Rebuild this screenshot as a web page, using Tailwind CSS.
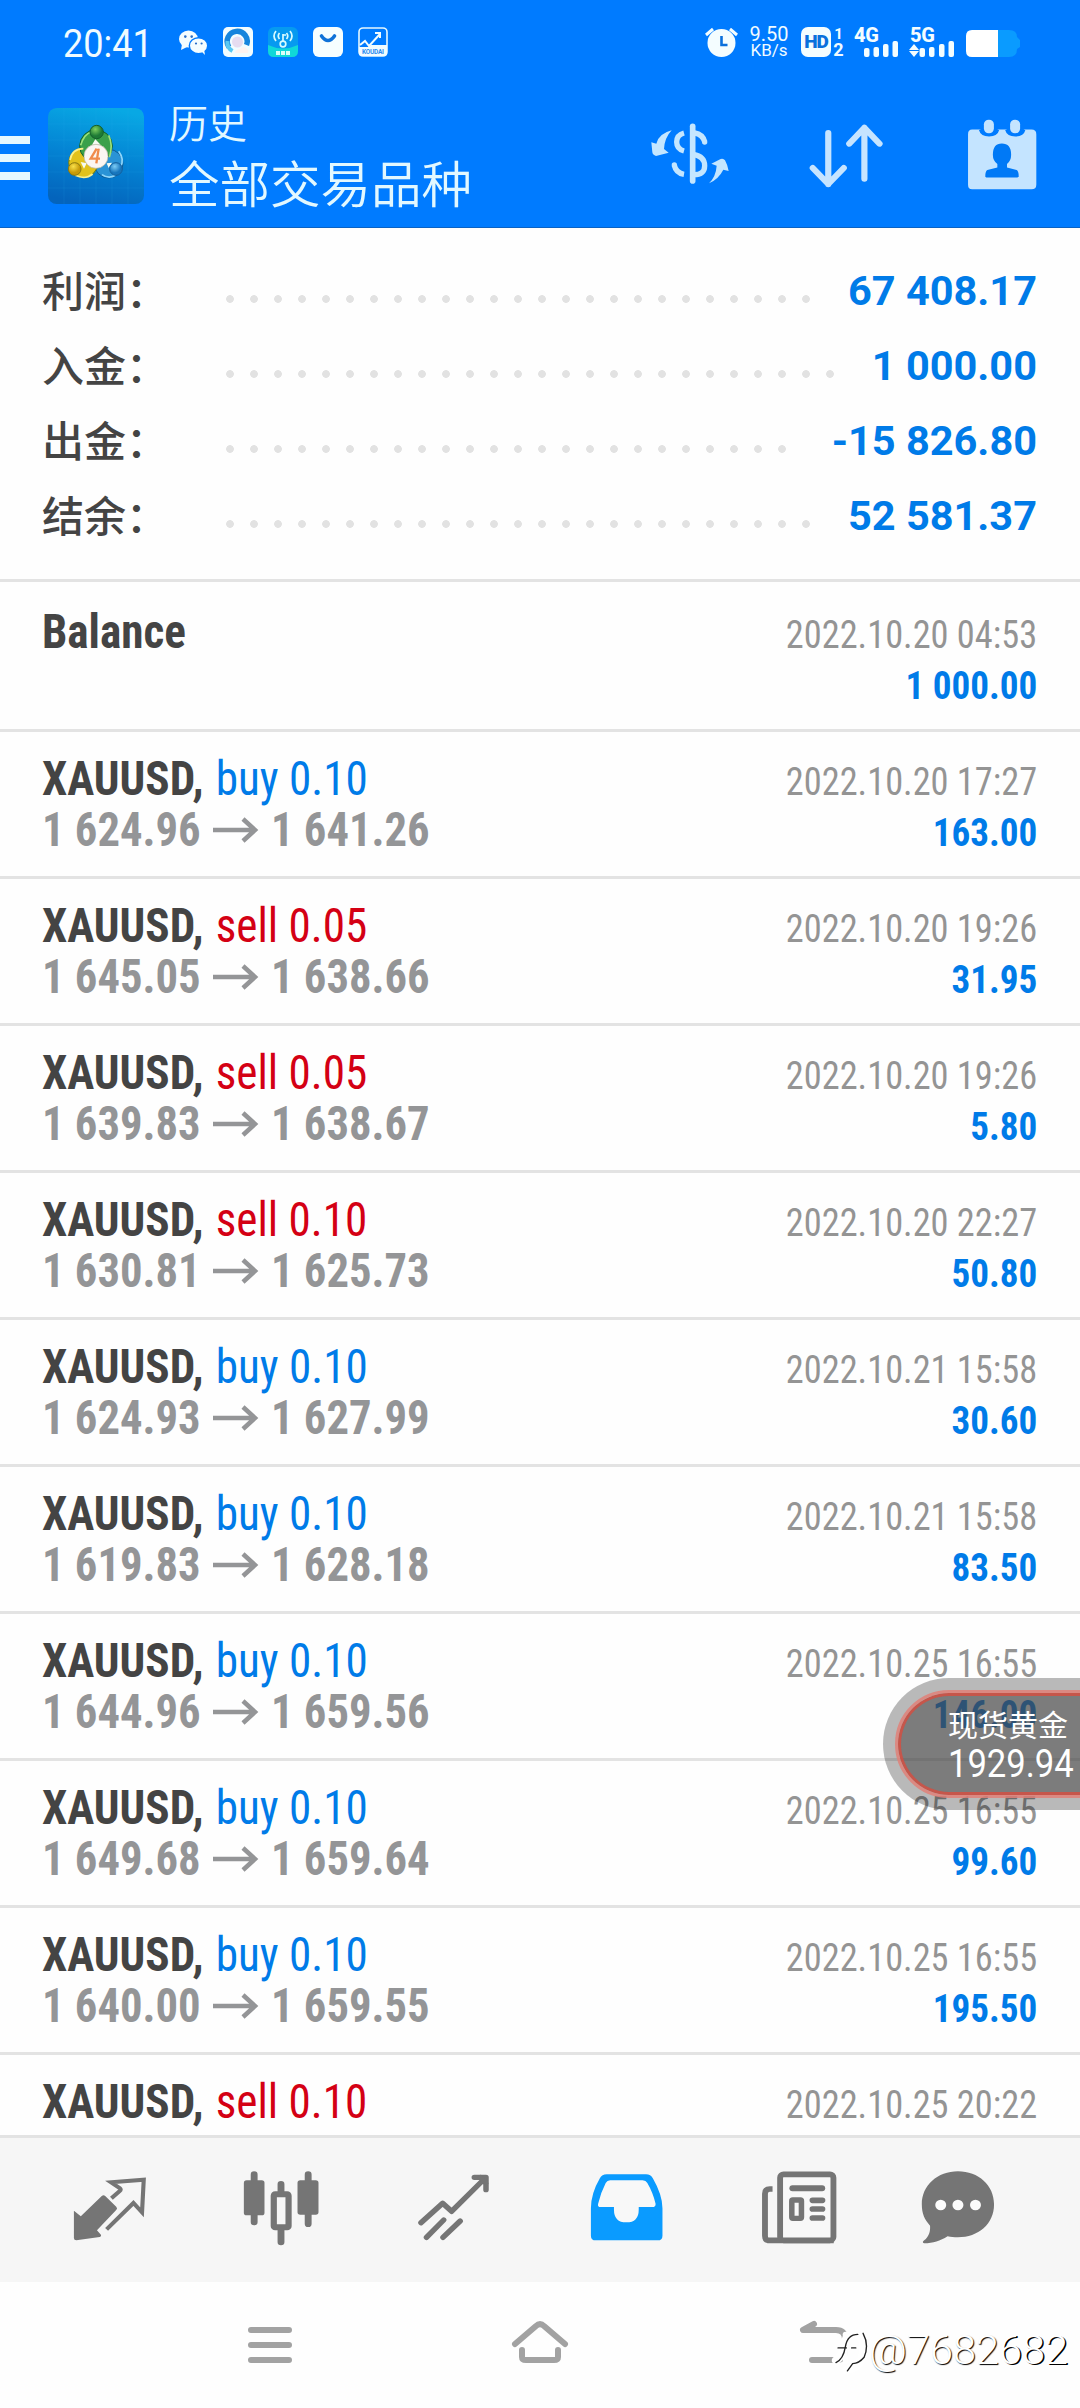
<!DOCTYPE html>
<html lang="zh-CN">
<head>
<meta charset="utf-8">
<title>历史</title>
<script src="https://cdn.jsdelivr.net/npm/@tailwindcss/browser@4"></script>
</head>
<body class="bg-[#fefefe]">
<div class="relative flex h-[2408px] w-[1080px] flex-col overflow-hidden bg-[#fefefe] font-[Roboto,'Noto_Sans_CJK_SC',sans-serif]">

  <header class="h-[228px] shrink-0 border-b border-[#0a62c4] bg-[#007bff]">
    <!-- status bar -->
    <div class="flex h-[84px] justify-between pt-[27px] pr-[60px] pl-[63px] text-[#f0fbff]">
      <div class="flex items-start">
        <div class="w-[116px]"><span class="block origin-left scale-x-95 text-[38px] leading-[35px] whitespace-nowrap [font-weight:430]">20:41</span></div>
        <svg class="mt-[3px] h-[25px] w-[28px]" viewBox="0 0 28 25"><ellipse cx="9.5" cy="9" rx="9.5" ry="8.6" fill="#f4fdff"/><path d="M3 14l-1 6 6-3z" fill="#f4fdff"/><ellipse cx="19.5" cy="15.7" rx="9.2" ry="8" fill="#f4fdff" stroke="#007bff" stroke-width="1.4"/><path d="M22 21l4 4-1-6z" fill="#f4fdff"/><g fill="#2a6fc8"><circle cx="6.3" cy="6.6" r="1.3"/><circle cx="12.7" cy="6.6" r="1.3"/><circle cx="17" cy="13.5" r="1.1"/><circle cx="22.6" cy="13.5" r="1.1"/></g></svg>
        <svg class="ml-4 size-[30px]" viewBox="0 0 30 30"><rect width="30" height="30" rx="5" fill="#f2fcff"/><path d="M6 20A10 10 0 1 1 23.500 18" fill="none" stroke="#1685dd" stroke-width="5.500"/><path d="M4.500 14a10 10 0 0 0 5 10" fill="none" stroke="#59c8f2" stroke-width="4"/><circle cx="14.500" cy="15" r="5.500" fill="#e6dcf0"/><path d="M12 26q1-4 5-4 3-4 7 0 2 1 1 4z" fill="#fff3f0"/></svg>
        <svg class="ml-[15px] size-[30px]" viewBox="0 0 30 30"><rect width="30" height="30" rx="6" fill="#069af0"/><path d="M0 18q15 7 30 0v6q0 6-6 6H6q-6 0-6-6z" fill="#10d8d8"/><g fill="none" stroke="#d8fbff" stroke-width="1.700"><path d="M8 4q-4 5 0 10M11.500 6q-2.500 3 0 6M22 4q4 5 0 10M18.500 6q2.500 3 0 6M15 7v8M15 8h3"/><circle cx="15" cy="17" r="2.800"/></g><g fill="#d8fff8"><rect x="8" y="24" width="4" height="4"/><rect x="13" y="24" width="4" height="4"/><rect x="18" y="24" width="4" height="4"/></g></svg>
        <svg class="ml-[15px] size-[30px]" viewBox="0 0 30 30"><rect width="30" height="30" rx="6" fill="#f6feff"/><path d="M8.500 9q6.500 9 13 0" fill="none" stroke="#0f72d8" stroke-width="3.600" stroke-linecap="round"/></svg>
        <svg class="ml-[15px] size-[30px] overflow-visible" viewBox="0 0 30 30"><rect x="1" y="1" width="28" height="28" rx="4" fill="none" stroke="#e4f8ff" stroke-width="1.600"/><path d="M1 20h9l3-2h16v8q0 3-3 3H4q-3 0-3-3z" fill="#f2fcff"/><path d="M2 18l5-4 4 5L22 7M17 6h5v5" fill="none" stroke="#f2fcff" stroke-width="2"/><text x="15" y="27" font-size="6.500" font-weight="700" text-anchor="middle" fill="#2b8cf0" textLength="22">KOUDAI</text></svg>
      </div>
      <div class="flex items-start">
        <svg class="h-[30px] w-[33px]" viewBox="0 0 33 30"><circle cx="16.500" cy="16" r="14" fill="#f4fdff"/><path d="M1 8l7-6M32 8l-7-6" stroke="#f4fdff" stroke-width="3"/><path d="M16.500 9v9h6" fill="none" stroke="#0a70dc" stroke-width="2.600"/></svg>
        <div class="ml-[12px] flex w-[38px] flex-col items-center"><span class="text-[20px] leading-[15px]">9.50</span><span class="mt-px text-[17px] leading-[15px]">KB/s</span></div>
        <div class="ml-[13px] flex h-[30px] w-[30px] items-center justify-center rounded-[7px] bg-[#f4fdff] text-[19px] font-black tracking-[-1px] text-[#0a70dc]">HD</div>
        <div class="ml-[2px] flex w-[11px] flex-col items-center font-bold"><span class="text-[15px] leading-[14px]">1</span><span class="text-[18px] leading-[17px]">2</span></div>
        <svg class="ml-[10px] h-[30px] w-[46px] overflow-visible" viewBox="0 0 46 30"><text x="0" y="14.500" font-size="20" font-weight="800" textLength="25" fill="#f4fdff">4G</text><g fill="#f4fdff"><rect x="10" y="21" width="5.500" height="9" rx="2"/><rect x="19.500" y="20" width="5.500" height="10" rx="2"/><rect x="29" y="17" width="5.500" height="13" rx="2"/><rect x="38.500" y="14" width="5.500" height="16" rx="2"/></g></svg>
        <svg class="ml-[9px] h-[30px] w-[47px] overflow-visible" viewBox="0 0 47 30"><text x="1" y="14.500" font-size="20" font-weight="800" textLength="25" fill="#f4fdff">5G</text><g fill="#f4fdff"><path d="M5 17l5 6H0zM5 30l5-6H0z"/><rect x="10.500" y="21" width="5.500" height="9" rx="2"/><rect x="20" y="20" width="5.500" height="10" rx="2"/><rect x="30" y="17" width="5.500" height="13" rx="2"/><rect x="39.500" y="14" width="5.500" height="16" rx="2"/></g></svg>
        <svg class="ml-[10px] h-[30px] w-[54px]" viewBox="0 0 54 30"><path d="M32 3h11q8 0 8 7l3 3v7l-3 2q0 8-8 8H32z" fill="#0a9bff"/><path d="M6 3h26v27H6q-6 0-6-6V9q0-6 6-6z" fill="#fff"/></svg>
      </div>
    </div>
    <!-- title bar -->
    <div class="flex h-[143px] items-start pt-[15px]">
      <div class="mt-[37px] flex w-[30px] flex-col gap-[10px]"><i class="h-2 bg-[#e6f8ff]"></i><i class="h-2 bg-[#e6f8ff]"></i><i class="h-2 bg-[#e6f8ff]"></i></div>
      <svg class="mt-[9px] ml-[18px] size-24" viewBox="24 54 288 288">
        <defs>
          <linearGradient id="t" x1=".6" y1="0" x2=".4" y2="1"><stop offset="0" stop-color="#08a8e4"/><stop offset=".5" stop-color="#0484d4"/><stop offset="1" stop-color="#0464bc"/></linearGradient>
          <radialGradient id="g" cx=".4" cy=".3"><stop offset="0" stop-color="#7fd060"/><stop offset="1" stop-color="#1d7a35"/></radialGradient>
          <radialGradient id="y" cx=".4" cy=".3"><stop offset="0" stop-color="#f8e04a"/><stop offset="1" stop-color="#c79a08"/></radialGradient>
          <radialGradient id="b" cx=".4" cy=".3"><stop offset="0" stop-color="#7cccf5"/><stop offset="1" stop-color="#1675bd"/></radialGradient>
        </defs>
        <rect x="24" y="54" width="288" height="288" rx="26" fill="url(#t)"/>
        <path d="M72 54v288M120 54v288M168 54v288M216 54v288M264 54v288M24 102h288M24 150h288M24 198h288M24 246h288M24 294h288" stroke="#2fb4ea" stroke-opacity=".2" stroke-width="2"/>
        <g stroke-width="3">
          <circle cx="206" cy="221" r="43" fill="#2a93d6" stroke="#0e5a92"/>
          <circle cx="130" cy="218" r="44" fill="#e2c21c" stroke="#6b7a10"/>
          <circle cx="168" cy="168" r="49" fill="#3aa04a" stroke="#12602a"/>
          <path d="M122 166q10-34 32-40M206 136q14 30 2 66" fill="none" stroke="#9be07a" stroke-width="5"/>
          <path d="M90 210q6-34 40-34M106 256q30 14 52-4" fill="none" stroke="#fbf08a" stroke-width="5"/>
          <path d="M236 184q18 24 6 46M186 254q20 14 40 2" fill="none" stroke="#8fd6fa" stroke-width="5"/>
          <path d="M166 148l-10 16h26zM122 216l10 20 8-16zM200 220l6 14 10-16z" fill="#f6fbf2"/>
          <circle cx="170" cy="126" r="20" fill="url(#g)" stroke="#155f2b"/>
          <circle cx="104" cy="237" r="19" fill="url(#y)" stroke="#8a7a10"/>
          <circle cx="228" cy="237" r="19" fill="url(#b)" stroke="#135f9c"/>
        </g>
        <circle cx="168" cy="199" r="36" fill="#fbf6f2" stroke="#b9b4a0" stroke-width="2"/>
        <path d="M170 176l-18 30h28M176 176l-7 44" fill="none" stroke="#f08a4a" stroke-width="7"/>
      </svg>
      <div class="ml-[25px] flex w-[479px] flex-col font-['Noto_Sans_CJK_SC'] text-[#e2f8ff] [font-weight:350]">
        <span class="h-[54px] text-[39px] leading-[44px]">历史</span>
        <span class="text-[50.500px] leading-[56px]">全部交易品种</span>
      </div>
      <svg class="mt-[18px] h-[70px] w-[81px]" preserveAspectRatio="none" viewBox="0 0 243 210">
        <g transform="translate(-24,-22)" fill="#c4e6ff">
          <path d="M95 62Q56 72 49 102L34 98 37 128Q38 136 48 139L86 129 72 118Q74 84 95 62z" />
          <path d="M207 221Q236 208 250 180L266 184Q263 166 255 152Q250 145 242 148L214 162 230 168Q228 200 207 221z"/>
          <path d="M158 50v164" stroke="#c4e6ff" stroke-width="17" stroke-linecap="round"/>
          <g fill="none" stroke="#c4e6ff" stroke-width="16"><path d="M132 70Q110 76 110 97T132 124"/><path d="M103 167Q108 190 132 194"/><path d="M164 70Q188 74 194 96" /><path d="M160 134Q194 140 194 168T160 195"/></g>
          <circle cx="103" cy="166" r="8"/><circle cx="194" cy="97" r="8"/>
        </g>
      </svg>
      <svg class="mt-[23px] ml-[80px] h-[68px] w-[75px]" preserveAspectRatio="none" viewBox="780 365 218 204" fill="none" stroke="#c6e4ff" stroke-width="18" stroke-linecap="round" stroke-linejoin="round"><path d="M836 398v154M791 503l45 48 45-48M941 535V382M897 430l44-48 44 48"/></svg>
      <svg class="mt-[20px] ml-[83px] h-[71px] w-[70px]" preserveAspectRatio="none" viewBox="1240 358 203 214"><path d="M1255 390h24q4 16 25 16t25-16h26q4 16 25 16t25-16h22q14 0 14 14v152q0 14-14 14h-172q-12 0-12-14V404q0-14 12-14z" fill="#c4e4ff"/><path d="M1279 390q4 16 25 16t25-16M1355 390q4 16 25 16t25-16" fill="none" stroke="#007bff" stroke-width="9"/><rect x="1289" y="360" width="29" height="41" rx="14" fill="#c4e4ff"/><rect x="1365" y="360" width="29" height="41" rx="14" fill="#c4e4ff"/><path d="M1341 432q27 0 27 34 0 18-12 28v10l28 8q6 3 6 20l-4 2h-90l-3-2q0-17 6-20l29-8v-10q-13-10-13-28 0-34 26-34z" fill="#0079f6"/></svg>
    </div>
  </header>

  <!-- totals -->
  <section id="totals" class="h-[354px] shrink-0 border-b-[3px] border-[#e3e3e3] pt-[24px] pr-[43px] pl-[42px]"></section>

  <!-- deals -->
  <main id="deals" class="h-[1553px] shrink-0 overflow-hidden"></main>

  <!-- tab bar -->
  <nav class="grid h-[147px] shrink-0 grid-cols-6 items-start justify-items-center border-t-[3px] border-[#e3e3e3] bg-[#f6f6f6] px-[23px] pt-[29px]">
    <svg class="h-[80px] w-[86px]" preserveAspectRatio="none" viewBox="192 410 250 240" fill="#757575"><path d="M215 541l20 17 61-61q5-4 10 0l32 32q5 5 0 10l-56 61 12 14q1 5-4 6l-68 10q-7 0-7-7z"/><path d="M324 504l24-22q6-4 0-9l-25-17 95-8-5 98-25-28-78 79" fill="none" stroke="#757575" stroke-width="12"/></svg>
    <svg class="h-[80px] w-[86px]" preserveAspectRatio="none" viewBox="692 410 250 240"><g stroke="#757575" stroke-width="20" stroke-linecap="round"><path d="M739 433v142M896 433v147M817 462v30M817 600v35"/></g><rect x="709" y="450" width="60" height="105" rx="8" fill="#757575"/><rect x="865" y="450" width="61" height="103" rx="8" fill="#757575"/><rect x="796" y="492" width="43" height="99" rx="4" fill="#f6f6f6" stroke="#757575" stroke-width="18"/></svg>
    <svg class="h-[80px] w-[86px]" preserveAspectRatio="none" viewBox="1193 410 250 240" fill="none" stroke="#757575" stroke-width="16" stroke-linejoin="round" stroke-linecap="round"><path d="M1222 577l63-58 26 24 92-94M1377 441h34v37M1238 621l50-52M1286 621l50-49"/><path d="M1395 441l16 18" stroke-width="14"/></svg>
    <svg class="h-[80px] w-[86px]" preserveAspectRatio="none" viewBox="125 410 250 240"><path d="M194 432h114q14 0 20 12 28 50 28 90v82q0 14-14 14H162q-14 0-14-14v-82q0-44 26-90 6-12 20-12z" fill="#0a9bff"/><path d="M204 450h94q10 0 14 8 16 28 24 62 1 10-10 10h-39v8q0 38-36 38t-36-38v-8h-38q-11 0-8-10 8-34 22-62 4-8 13-8z" fill="#f8f8f8"/></svg>
    <svg class="h-[80px] w-[86px]" preserveAspectRatio="none" viewBox="626 410 250 240" fill="none" stroke="#757575"><path d="M668 630h-5q-8-2-8-14V490q0-14 14-14h8M663 630h192" stroke-width="17"/><rect x="699" y="432" width="155" height="198" rx="10" stroke-width="17" fill="#f8f8f8"/><path d="M735 474h86" stroke-width="18" stroke-linecap="round"/><rect x="733" y="509" width="28" height="55" rx="3" stroke-width="16"/><path d="M793 510h29M793 536h29M793 563h29" stroke-width="17" stroke-linecap="round"/></svg>
    <svg class="h-[80px] w-[86px] overflow-visible" preserveAspectRatio="none" viewBox="1126 410 250 240"><path d="M1213 423c60 0 105 42 105 99 0 60-46 99-105 99-12 0-20-1-30-3-22 14-42 21-68 21-6-2-4-6 0-9 14-12 18-26 17-44-16-18-24-36-24-64 0-57 46-99 105-99z" fill="#757575"/><g fill="#fbfbfb"><circle cx="1163" cy="524" r="16"/><circle cx="1213" cy="524" r="16"/><circle cx="1264" cy="524" r="16"/></g></svg>
  </nav>

  <!-- system navigation -->
  <div class="flex h-[126px] shrink-0 items-start pt-[38px]">
    <svg class="ml-[247px] h-[44px] w-[46px]" viewBox="0 0 46 44" stroke="#a2a2a2" stroke-width="6" stroke-linecap="round"><path d="M4 10h38M4 25h38M4 40h38"/></svg>
    <svg class="ml-[218px] h-[46px] w-[58px]" viewBox="0 0 58 46" fill="none" stroke="#a2a2a2" stroke-width="6" stroke-linecap="round" stroke-linejoin="round"><path d="M4 24L25 6q4-4 8 0l21 18M11 30v7q0 3 4 3h28q4 0 4-3v-7"/></svg>
    <svg class="ml-[230px] h-[46px] w-[50px]" viewBox="0 0 50 46" fill="none" stroke="#a2a2a2" stroke-width="6" stroke-linecap="round" stroke-linejoin="round"><path d="M15 4L4 10h33q9 0 9 9v12q0 9-9 9H13"/></svg>
  </div>

  <!-- floating quote -->
  <aside class="absolute top-[1678px] left-[883px] h-[132px] w-[280px] rounded-full bg-black/27 p-3">
    <div class="h-full rounded-full border-[3px] border-[#e08078]/85">
      <div class="flex h-full flex-col rounded-full border-[3px] border-[#d24f42]/85 bg-[#505050]/58 pl-[47px] text-white">
        <span class="mt-[8px] font-['Noto_Sans_CJK_SC'] text-[30px] leading-[38px]">现货黄金</span>
        <span class="mt-[3px] origin-left scale-x-91 text-[38px] leading-[38px] [font-weight:430]">1929.94</span>
      </div>
    </div>
  </aside>

  <!-- watermark -->
  <div class="absolute top-[2326px] left-[829px] flex items-center font-light text-white">
    <svg class="h-[48px] w-[40px]" viewBox="0 0 37 46" fill="none" stroke-linecap="round"><path d="M6 33Q12 30 14 18T26 8Q34 12 32 26T16 42" stroke="#fff" stroke-width="8"/><path d="M15 8v26" stroke="#fff" stroke-width="5"/><path d="M6 35Q13 32 15 20T27 8M8 21h8M21 21h4M32 7Q38 18 33 30 28 36 22 36L17 43" stroke="#222" stroke-width="1.300"/></svg>
    <span class="text-[41.500px] leading-[46px] whitespace-nowrap [text-shadow:1px_1px_1px_#000]">@7682<span class="[text-shadow:1.5px_1px_0_#000]">682</span></span>
  </div>
</div>

<script>
const totals = [['利润','67 408.17',25],['入金','1 000.00',26],['出金','-15 826.80',24],['结余','52 581.37',25]];
document.getElementById('totals').innerHTML = totals.map(([k,v,n]) => `
  <div class="flex h-[75px] items-start text-[#444]">
    <span class="w-[176px] font-['Noto_Sans_CJK_SC'] text-[42px] leading-[73px] [font-weight:550]">${k}：</span>
    <span class="mt-[41px] h-[12px] bg-[radial-gradient(circle,#e2e2e2_3.500px,transparent_4.200px)] bg-[length:24px_12px]" style="width:${n*24}px"></span>
    <b class="ml-auto text-[41.5px] leading-[78px] font-bold whitespace-nowrap text-[#007be8]">${v}</b>
  </div>`).join('');

const S = 'XAUUSD,';
const deals = [
  ['Balance','','','','','2022.10.20 04:53','1 000.00'],
  [S,'buy','0.10','1 624.96','1 641.26','2022.10.20 17:27','163.00'],
  [S,'sell','0.05','1 645.05','1 638.66','2022.10.20 19:26','31.95'],
  [S,'sell','0.05','1 639.83','1 638.67','2022.10.20 19:26','5.80'],
  [S,'sell','0.10','1 630.81','1 625.73','2022.10.20 22:27','50.80'],
  [S,'buy','0.10','1 624.93','1 627.99','2022.10.21 15:58','30.60'],
  [S,'buy','0.10','1 619.83','1 628.18','2022.10.21 15:58','83.50'],
  [S,'buy','0.10','1 644.96','1 659.56','2022.10.25 16:55','146.00'],
  [S,'buy','0.10','1 649.68','1 659.64','2022.10.25 16:55','99.60'],
  [S,'buy','0.10','1 640.00','1 659.55','2022.10.25 16:55','195.50'],
  [S,'sell','0.10','1 659.36','1 656.24','2022.10.25 20:22','34.20'],
];
const arrow = '<svg class="mx-[12px] h-[26px] w-[46px]" viewBox="0 0 46 26" fill="none" stroke="#949597" stroke-width="4.500"><path d="M0 13h43M30 2l12 11-12 11"/></svg>';
document.getElementById('deals').innerHTML = deals.map(([s,side,vol,a,b,date,amt],i) => `
  <div class="flex h-[147px] justify-between ${i ? 'border-t-[3px] border-[#e3e3e3]' : 'pt-[3px]'} pr-[43px] pl-[42px] font-stretch-75%">
    <div class="pt-[21.500px] text-[48px] leading-[50.500px] whitespace-nowrap">
      <div class="origin-left scale-x-94"><b class="font-bold text-[#444]">${s}</b>${side ? ` <span class="ml-[2px] ${side==='buy' ? 'text-[#007be8]' : 'text-[#d40014]'}">${side} ${vol}</span>` : ''}</div>
      ${a ? `<div class="mt-px flex items-center font-bold text-[#949597]"><span class="w-[159px]"><span class="block origin-left scale-x-93">${a}</span></span>${arrow}<span class="block origin-left scale-x-93">${b}</span></div>` : ''}
    </div>
    <div class="flex flex-col items-end pt-[24.500px] text-[39.500px] leading-[50.500px] whitespace-nowrap">
      <span class="origin-right scale-x-92 text-[#949494]">${date}</span>
      <span class="mt-px origin-right scale-x-94 font-bold text-[#007be8]">${amt}</span>
    </div>
  </div>`).join('');
</script>
</body>
</html>
